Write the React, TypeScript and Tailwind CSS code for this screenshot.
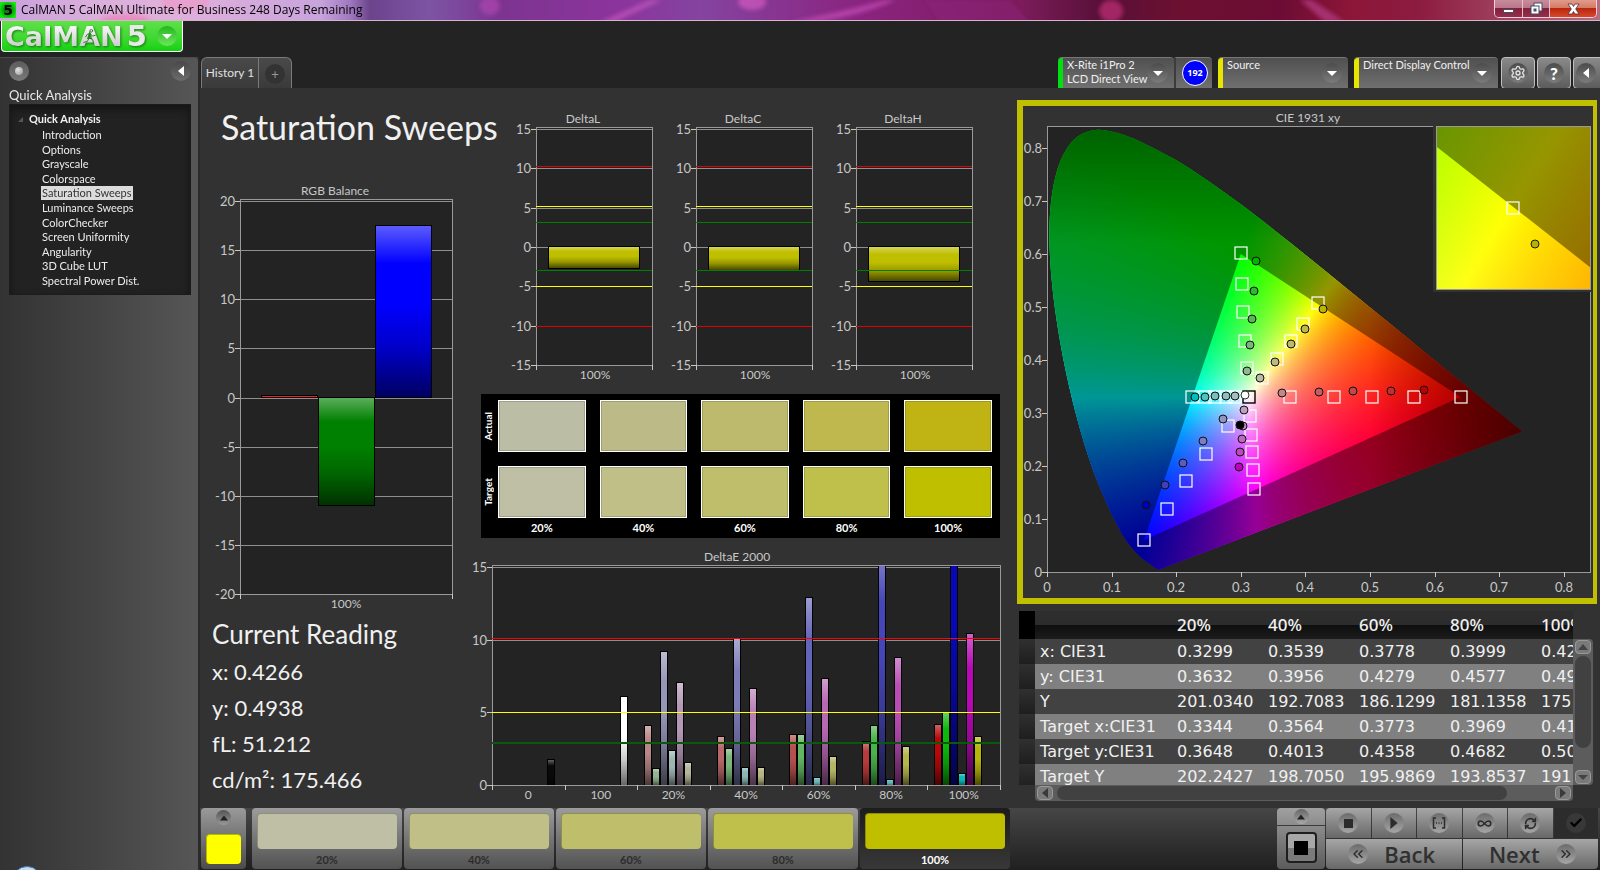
import React from 'react'
import { Settings, RefreshCw, Infinity as InfinityIcon, Check, ChevronsLeft, ChevronsRight } from 'lucide-react'

const NAV_ITEMS = [
  'Introduction',
  'Options',
  'Grayscale',
  'Colorspace',
  'Saturation Sweeps',
  'Luminance Sweeps',
  'ColorChecker',
  'Screen Uniformity',
  'Angularity',
  '3D Cube LUT',
  'Spectral Power Dist.',
]

const LEVELS = ['20%', '40%', '60%', '80%', '100%']

const SWATCHES = [
  { actual: '#bbbda5', target: '#bfbfa5' },
  { actual: '#bcba86', target: '#c0bf87' },
  { actual: '#bdba6d', target: '#bfbf6b' },
  { actual: '#bfb84f', target: '#bfc04b' },
  { actual: '#bfb414', target: '#bfbf00' },
]

const READINGS = ['x: 0.4266', 'y: 0.4938', 'fL: 51.212', 'cd/m²: 175.466']

const TABLE_ROWS = [
  ['x: CIE31', '0.3299', '0.3539', '0.3778', '0.3999', '0.4266'],
  ['y: CIE31', '0.3632', '0.3956', '0.4279', '0.4577', '0.4938'],
  ['Y', '201.0340', '192.7083', '186.1299', '181.1358', '175.4660'],
  ['Target x:CIE31', '0.3344', '0.3564', '0.3773', '0.3969', '0.4193'],
  ['Target y:CIE31', '0.3648', '0.4013', '0.4358', '0.4682', '0.5053'],
  ['Target Y', '202.2427', '198.7050', '195.9869', '193.8537', '191.9590'],
]

/* ---------- bar charts ---------- */

interface Bar {
  x: number
  w: number
  v: number
  color: string
}

interface ChartProps {
  id: string
  title: string
  titleX: number
  width: number
  height: number
  plot: { x: number; y: number; w: number; h: number }
  min: number
  max: number
  limits?: { v: number; color: string; w?: number }[]
  bars: Bar[]
  labels: { x: number; text: string }[]
  ticks: number[]
}

function BarChart({ id, title, titleX, width, height, plot, min, max, limits = [], bars, labels, ticks }: ChartProps) {
  const range = max - min
  const gridY = (v: number) => Math.round(plot.y + 2 + ((max - v) / range) * (plot.h - 2))
  const valueY = (v: number) => Math.round(plot.y - 1 + ((max - v) / range) * (plot.h + 2))
  const steps: number[] = []
  for (let v = max; v >= min; v -= 5) steps.push(v)
  const bottom = plot.y + plot.h

  return (
    <svg viewBox={`0 0 ${width} ${height}`} className="block h-auto w-full" role="img" aria-label={title}>
      <defs>
        <linearGradient id={`${id}-shade`} x1="0" y1="0" x2="0" y2="1">
          <stop offset="0" stopColor="#fff" stopOpacity="0.36" />
          <stop offset="0.22" stopColor="#fff" stopOpacity="0" />
          <stop offset="0.45" stopColor="#000" stopOpacity="0" />
          <stop offset="0.7" stopColor="#000" stopOpacity="0.2" />
          <stop offset="1" stopColor="#000" stopOpacity="0.62" />
        </linearGradient>
        <clipPath id={`${id}-plot`}>
          <rect x={plot.x} y={plot.y + 1} width={plot.w} height={plot.h - 1} />
        </clipPath>
      </defs>
      <text x={titleX} y={plot.y - 4} textAnchor="middle" fontSize="12" fill="#c8c8c8">{title}</text>
      <g shapeRendering="crispEdges">
        <rect x={plot.x} y={plot.y} width={plot.w} height={plot.h} fill="#232323" />
        {steps.map((v) => (
          <g key={v} stroke="#8f8f8f">
            <line x1={plot.x} x2={plot.x + plot.w} y1={gridY(v) + 0.5} y2={gridY(v) + 0.5} />
            <line x1={plot.x - 5} x2={plot.x} y1={gridY(v) + 0.5} y2={gridY(v) + 0.5} stroke="#c8c8c8" />
          </g>
        ))}
        <rect x={plot.x + 0.5} y={plot.y + 0.5} width={plot.w} height={plot.h} fill="none" stroke="#9a9a9a" />
        <g clipPath={`url(#${id}-plot)`}>
          {bars.map((b, i) => {
            const y0 = valueY(Math.max(0, min))
            const y1 = valueY(b.v)
            const top = Math.min(y0, y1)
            const h = Math.max(2, Math.abs(y1 - y0))
            return (
              <g key={i}>
                <rect x={b.x} y={top} width={b.w} height={h + 1} fill="#000" />
                <rect x={b.x + 1} y={top + 1} width={b.w - 2} height={h - 1} fill={b.color} />
                <rect x={b.x + 1} y={top + 1} width={b.w - 2} height={h - 1} fill={`url(#${id}-shade)`} />
              </g>
            )
          })}
        </g>
        {limits.map((l) => (
          <rect key={l.v} x={plot.x} y={valueY(l.v)} width={plot.w} height={l.w ?? 1} fill={l.color} />
        ))}
        {ticks.map((x) => (
          <rect key={x} x={x} y={bottom} width="1" height="5" fill="#c8c8c8" />
        ))}
      </g>
      {steps.map((v) => (
        <text key={v} x={plot.x - 5} y={gridY(v) + 5} textAnchor="end" fontSize="13" fill="#c8c8c8">{v}</text>
      ))}
      {labels.map((l) => (
        <text key={l.text} x={l.x} y={bottom + 14} textAnchor="middle" fontSize="12" fill="#c8c8c8">{l.text}</text>
      ))}
    </svg>
  )
}

const DELTA_LIMITS = [
  { v: 10, color: '#e00000' },
  { v: 5, color: '#ffff00' },
  { v: 3, color: '#008000' },
  { v: -3, color: '#008000' },
  { v: -5, color: '#ffff00' },
  { v: -10, color: '#e00000' },
]

function DeltaChart({ id, title, value }: { id: string; title: string; value: number }) {
  return (
    <BarChart
      id={id}
      title={title}
      titleX={83}
      width={160}
      height={280}
      plot={{ x: 36, y: 19, w: 116, h: 238 }}
      min={-15}
      max={15}
      limits={DELTA_LIMITS}
      bars={[{ x: 48, w: 92, v: value, color: '#bfbf00' }]}
      labels={[{ x: 95, text: '100%' }]}
      ticks={[36, 152]}
    />
  )
}

// slot order inside a group: R G B C M Y W
const DELTA_E: { label: string; bars: [number, number, string][] }[] = [
  { label: '0', bars: [[6, 1.85, '#0a0a0a']] },
  { label: '100', bars: [[6, 6.1, '#ffffff']] },
  { label: '20%', bars: [[0, 4.1, '#b98787'], [1, 1.2, '#92b492'], [2, 9.1, '#9696b8'], [3, 2.45, '#9fb5b5'], [4, 7.05, '#b698b6'], [5, 1.63, '#b5b59b']] },
  { label: '40%', bars: [[0, 3.35, '#b86868'], [1, 2.6, '#7bb57b'], [2, 9.97, '#7c7cb8'], [3, 1.28, '#8cb6b6'], [4, 6.65, '#b980b6'], [5, 1.28, '#b5b582']] },
  { label: '60%', bars: [[0, 3.5, '#b75050'], [1, 3.5, '#63b463'], [2, 12.8, '#6464b8'], [3, 0.6, '#6fb7b7'], [4, 7.33, '#b768b2'], [5, 2.04, '#b5b566']] },
  { label: '80%', bars: [[0, 3.07, '#b83a3a'], [1, 4.1, '#48b548'], [2, 16, '#4646b8'], [3, 0.46, '#58b8b8'], [4, 8.73, '#b94cb5'], [5, 2.73, '#b5b54b']] },
  { label: '100%', bars: [[0, 4.17, '#b80808'], [1, 5, '#0bb80b'], [2, 20, '#0808b8'], [3, 0.87, '#0bb8b8'], [4, 10.35, '#b808b5'], [5, 3.35, '#b5b50b']] },
]

function DeltaEChart() {
  const left = 22
  const width = 508
  const group = width / DELTA_E.length
  return (
    <BarChart
      id="delta-e"
      title="DeltaE 2000"
      titleX={267}
      width={540}
      height={260}
      plot={{ x: left, y: 21, w: width, h: 220 }}
      min={0}
      max={15}
      limits={[
        { v: 10, color: '#ff0000' },
        { v: 5, color: '#ffff00' },
        { v: 3, color: '#0b5a0b', w: 2 },
      ]}
      bars={DELTA_E.flatMap((g, i) =>
        g.bars.map(([slot, v, color]) => ({
          x: Math.round(left + i * group + 7 + slot * 8),
          w: 8,
          v,
          color,
        }))
      )}
      labels={DELTA_E.map((g, i) => ({ x: left + (i + 0.5) * group, text: g.label }))}
      ticks={[0, 1, 2, 3, 4, 5, 6, 7].map((i) => Math.round(left + i * group))}
    />
  )
}

/* ---------- chromaticity diagram ---------- */

type Pt = [number, number]

const LOCUS: Pt[] = [
  [0.1741, 0.005], [0.1714, 0.0051], [0.1644, 0.0109], [0.1566, 0.0177], [0.144, 0.0297], [0.1241, 0.0578],
  [0.1096, 0.0868], [0.0913, 0.1327], [0.0687, 0.2007], [0.0454, 0.295], [0.0235, 0.4127], [0.0082, 0.5384],
  [0.0039, 0.6548], [0.0139, 0.7502], [0.0389, 0.812], [0.0743, 0.8338], [0.1142, 0.8262], [0.1547, 0.8059],
  [0.1929, 0.7816], [0.2296, 0.7543], [0.3016, 0.6923], [0.3731, 0.6245], [0.4441, 0.5547], [0.5125, 0.4866],
  [0.5752, 0.4242], [0.627, 0.3725], [0.6658, 0.334], [0.6915, 0.3083], [0.719, 0.2809], [0.7347, 0.2653],
]
const GAMUT: Pt[] = [[0.3, 0.6], [0.64, 0.33], [0.15, 0.06]]

// xy -> display colour, scaled so that the strongest channel is full
function xyColor(x: number, y: number) {
  const X = x / y
  const Z = (1 - x - y) / y
  const lin = [
    3.2406 * X - 1.5372 - 0.4986 * Z,
    -0.9689 * X + 1.8758 + 0.0415 * Z,
    0.0557 * X - 0.204 + 1.057 * Z,
  ].map((c) => Math.max(0, c))
  const peak = Math.max(...lin)
  let fade = 1
  if (x > 0.5) fade -= (x - 0.5) * 2.2
  if (y > 0.62) fade -= (y - 0.62) * 1.6
  const [r, g, b] = lin.map((c) => Math.round((255 * fade * c) / peak))
  return `rgb(${r},${g},${b})`
}

interface View {
  x: number
  y: number
  w: number
  h: number
  x0: number
  x1: number
  y0: number
  y1: number
}

function ColorField({ id, view }: { id: string; view: View }) {
  const sx = (v: number) => view.x + ((v - view.x0) / (view.x1 - view.x0)) * view.w
  const sy = (v: number) => view.y + view.h - ((v - view.y0) / (view.y1 - view.y0)) * view.h
  const p = ([x, y]: Pt) => `${sx(x).toFixed(1)} ${sy(y).toFixed(1)}`

  let locus = `M${p(LOCUS[0])}`
  for (let i = 0; i < LOCUS.length - 1; i++) {
    const a = LOCUS[Math.max(0, i - 1)]
    const b = LOCUS[i]
    const c = LOCUS[i + 1]
    const d = LOCUS[Math.min(LOCUS.length - 1, i + 2)]
    locus += `C${p([b[0] + (c[0] - a[0]) / 6, b[1] + (c[1] - a[1]) / 6])} ${p([c[0] - (d[0] - b[0]) / 6, c[1] - (d[1] - b[1]) / 6])} ${p(c)}`
  }
  locus += 'Z'
  const triangle = `M${GAMUT.map(p).join('L')}Z`

  const rows: React.ReactNode[] = []
  const cols = Math.round(view.w / 6)
  for (let ry = 0; ry < view.h; ry += 2) {
    const y = view.y1 - ((ry + 1) / view.h) * (view.y1 - view.y0)
    const stops: React.ReactNode[] = []
    for (let c = 0; c <= cols; c++) {
      const x = view.x0 + (c / cols) * (view.x1 - view.x0)
      if (x + y > 1.03) break
      stops.push(<stop key={c} offset={(c / cols).toFixed(4)} stopColor={xyColor(x, Math.max(y, 0.002))} />)
    }
    // each strip runs under the next one so no seam shows between them
    rows.push(
      <g key={ry}>
        <linearGradient id={`${id}-${ry}`}>{stops}</linearGradient>
        <rect x={view.x} y={view.y + ry} width={view.w} height="4" fill={`url(#${id}-${ry})`} shapeRendering="crispEdges" />
      </g>
    )
  }

  return (
    <g>
      <clipPath id={`${id}-frame`}>
        <rect x={view.x} y={view.y} width={view.w} height={view.h} />
      </clipPath>
      <clipPath id={`${id}-locus`}>
        <path d={locus} />
      </clipPath>
      <g clipPath={`url(#${id}-frame)`}>
        <g clipPath={`url(#${id}-locus)`}>{rows}</g>
        <path d={locus + triangle} fill="#000" fillOpacity="0.41" fillRule="evenodd" />
      </g>
    </g>
  )
}

const TARGETS: Pt[] = [
  [0.2998, 0.6025], [0.3016, 0.5428], [0.3039, 0.4912], [0.3068, 0.4365], [0.3103, 0.3849],
  [0.4198, 0.5075], [0.3964, 0.4686], [0.3773, 0.4365], [0.3563, 0.4025], [0.3324, 0.3667],
  [0.6403, 0.3308], [0.5675, 0.3308], [0.5023, 0.3308], [0.4447, 0.3308], [0.3754, 0.3308],
  [0.2241, 0.3308], [0.2445, 0.3308], [0.2602, 0.3308], [0.2771, 0.3308], [0.2916, 0.3308],
  [0.3207, 0.1566], [0.319, 0.1918], [0.3167, 0.2258], [0.3155, 0.2585], [0.3138, 0.2937],
  [0.1496, 0.061], [0.1851, 0.1195], [0.2159, 0.1723], [0.2462, 0.222], [0.2794, 0.2761],
]

const MEASURED: [number, number, string][] = [
  [0.3237, 0.5868, '#00b400'], [0.3202, 0.5302, '#35b535'], [0.3173, 0.478, '#58b558'], [0.3138, 0.4283, '#78b578'], [0.3098, 0.3799, '#92b892'],
  [0.4267, 0.4962, '#bfb400'], [0.3994, 0.4591, '#bfb74f'], [0.3779, 0.4302, '#bdb96d'], [0.3533, 0.3962, '#bcb986'], [0.33, 0.3654, '#bbbca5'],
  [0.5838, 0.344, '#c00000'], [0.5326, 0.3421, '#c03030'], [0.4738, 0.3421, '#c04a4a'], [0.4214, 0.339, '#c06060'], [0.3632, 0.3371, '#c08888'],
  [0.2294, 0.3308, '#00bfbf'], [0.2445, 0.3308, '#55bfbf'], [0.2602, 0.3327, '#78bfbf'], [0.2765, 0.3327, '#90bfbf'], [0.2916, 0.3327, '#a5bfbf'],
  [0.2975, 0.1987, '#bf00bf'], [0.2993, 0.2264, '#bf48bf'], [0.3016, 0.2516, '#bf68bf'], [0.3039, 0.2761, '#bf88bf'], [0.3051, 0.305, '#bf9fbf'],
  [0.2993, 0.278, '#000000'],
  [0.1537, 0.127, '#0000b8'], [0.1828, 0.1648, '#4040bc'], [0.2107, 0.2063, '#5c5cbe'], [0.2416, 0.2472, '#7c7cc0'], [0.2724, 0.2893, '#9494c0'],
]

function CieChart() {
  const view = { x: 24, y: 20, w: 544, h: 446, x0: 0, x1: 0.842, y0: 0, y1: 0.8415 }
  const inset = { x: 413, y: 20, w: 154, h: 163, x0: 0.3959, x1: 0.4437, y0: 0.479, y1: 0.5302 }
  const sx = (v: number) => Math.round(view.x + (v / view.x1) * view.w)
  const sy = (v: number) => Math.round(view.y + view.h - (v / view.y1) * view.h)
  const marks = [0, 1, 2, 3, 4, 5, 6, 7, 8]

  return (
    <svg viewBox="0 0 570 492" className="block h-auto w-full" role="img" aria-label="CIE 1931 xy">
      <text x="285" y="16" textAnchor="middle" fontSize="12" fill="#c8c8c8">CIE 1931 xy</text>
      <rect x={view.x + 0.5} y={view.y + 0.5} width={view.w - 1} height={view.h} fill="#232323" stroke="#9a9a9a" />
      {marks.map((m) => (
        <g key={m} shapeRendering="crispEdges">
          <rect x={view.x - 5} y={sy(m / 10)} width="5" height="1" fill="#c8c8c8" />
          <rect x={sx(m / 10)} y={view.y + view.h} width="1" height="5" fill="#c8c8c8" />
        </g>
      ))}
      {marks.map((m) => (
        <g key={m} fontSize="13" fill="#c8c8c8">
          <text x={view.x - 5} y={sy(m / 10) + 5} textAnchor="end">{m / 10}</text>
          <text x={sx(m / 10)} y={view.y + view.h + 20} textAnchor="middle">{m / 10}</text>
        </g>
      ))}
      <ColorField id="cie" view={view} />
      {TARGETS.map(([x, y], i) => (
        <rect key={i} x={sx(x) - 6} y={sy(y) - 6} width="12" height="12" fill="none" stroke="#fff" strokeWidth="1.2" />
      ))}
      <rect x={sx(0.312) - 6} y={sy(0.3308) - 6} width="12" height="12" fill="none" stroke="#000" strokeWidth="1.4" />
      {MEASURED.map(([x, y, color], i) => (
        <circle key={i} cx={sx(x)} cy={sy(y)} r="4" fill={color} stroke="#101010" />
      ))}
      <circle cx={sx(0.3068)} cy={sy(0.3346)} r="4" fill="#fff" stroke="#303030" />

      <rect x="410" y="18" width="160" height="168" fill="#323232" />
      <ColorField id="inset" view={inset} />
      <rect x="413.5" y="20.5" width="154" height="163" fill="none" stroke="#9a9a9a" />
      <rect x="484" y="96" width="12" height="12" fill="none" stroke="#fff" strokeWidth="1.2" />
      <circle cx="512" cy="138" r="4" fill="#b4b400" stroke="#202000" />
    </svg>
  )
}

/* ---------- window chrome and controls ---------- */

function TitleBar() {
  return (
    <div className="relative flex h-[21px] items-stretch overflow-hidden border-b border-[#d9b3cc] bg-[linear-gradient(90deg,#c8a0dc_0,#dcb0dc_100px,#e0b0dc_180px,#c8a4dc_320px,#a078c0_350px,#6c448c_370px,#7c54a4_430px,#7c3490_500px,#8c349c_620px,#8444a0_700px,#8a2480_860px,#7c1c5c_1020px,#581038_1100px,#6c1030_1180px,#6c0c34_1280px,#8c1638_1350px,#8c1c40_1420px,#b86c80_100%)]">
      <svg className="absolute inset-0 h-full w-full" viewBox="0 0 1600 20" preserveAspectRatio="none" aria-hidden="true">
        <defs>
          <filter id="title-blur"><feGaussianBlur stdDeviation="2" /></filter>
        </defs>
        <g filter="url(#title-blur)">
          <ellipse cx="125" cy="22" rx="26" ry="8" fill="#f06aa8" opacity="0.5" />
          <ellipse cx="185" cy="2" rx="24" ry="9" fill="#f58ab8" opacity="0.4" />
          <ellipse cx="490" cy="6" rx="10" ry="9" fill="#b84ab4" opacity="0.6" />
          <ellipse cx="752" cy="2" rx="14" ry="8" fill="#e060c8" opacity="0.6" />
          <path d="M600 22 L650 0 L662 0 L614 22Z" fill="#c858c0" opacity="0.7" />
          <path d="M790 22 Q850 10 885 0 L896 0 Q860 16 815 22Z" fill="#c850b8" opacity="0.7" />
          <path d="M940 22 L925 0 L1010 0 L1030 22Z" fill="#8c2080" opacity="0.4" />
          <ellipse cx="1111" cy="11" rx="12" ry="11" fill="#b42a70" opacity="0.8" />
          <path d="M1300 0 L1312 0 L1345 22 L1325 22Z" fill="#b03a80" opacity="0.8" />
        </g>
      </svg>
      <div className="relative flex flex-1 items-center">
        <span className="flex h-4 w-4 items-center justify-center bg-[radial-gradient(#0a7a0a_20%,#10e810_80%)] font-['DejaVu_Sans',sans-serif] text-sm leading-none font-bold text-black">5</span>
        <h1 className="ml-[5px] font-['Open_Sans',sans-serif] text-[12px] leading-5 text-black">
          CalMAN 5 CalMAN Ultimate for Business 248 Days Remaining
        </h1>
      </div>
      <div className="relative mr-[3px] flex h-[18px] overflow-hidden rounded-b-[5px] border border-t-0 border-[#f0d0dc]">
        <button aria-label="Minimize" className="flex w-7 items-end justify-center border-r border-[#e8c0cc] bg-[linear-gradient(#c88c9c_0,#b87488_50%,#84203c_50%,#94304c_100%)] pb-1">
          <span className="h-1 w-[11px] border border-[#405060] bg-white" />
        </button>
        <button aria-label="Restore" className="flex w-[27px] items-center justify-center border-r border-[#e8c0cc] bg-[linear-gradient(#c88c9c_0,#b87488_50%,#84203c_50%,#94304c_100%)]">
          <svg width="13" height="13" viewBox="0 0 13 13" fill="none">
            <rect x="4" y="1" width="8" height="8" fill="#fff" stroke="#405060" />
            <rect x="1" y="4" width="8" height="8" fill="#fff" stroke="#405060" />
            <rect x="4" y="7" width="2" height="2" fill="#94304c" stroke="#405060" />
          </svg>
        </button>
        <button aria-label="Close" className="flex w-[46px] items-center justify-center bg-[linear-gradient(#e09c8c_0,#d47860_50%,#b82810_50%,#d84828_100%)]">
          <svg width="13" height="12" viewBox="0 0 13 12">
            <path d="M1 1h4l1.500 2.500L8 1h4L8.700 6l3.300 5H8L6.500 8.500 5 11H1l3.300-5z" fill="#fff" stroke="#503040" strokeWidth="0.8" />
          </svg>
        </button>
      </div>
    </div>
  )
}

function Logo() {
  return (
    <button className="ml-px flex h-[31px] w-[182px] items-center rounded-b border-r border-b border-l border-white bg-linear-to-b from-[#5fe04a] to-[#0cd20c] pl-[3px]" aria-label="CalMAN 5 menu">
      <span className="relative bg-linear-to-b from-white to-[#c4c4c4] bg-clip-text font-['DejaVu_Sans',sans-serif] text-[27px] leading-[27px] font-bold text-transparent drop-shadow-[1px_1px_1px_rgba(0,60,0,0.6)]">
        CalMAN
        <svg className="absolute top-[5px] left-[77px]" width="16" height="18" viewBox="0 0 18 20" fill="none" stroke="#2c7a2c" strokeWidth="1.100" strokeLinecap="round">
          <circle cx="10.500" cy="3" r="1.500" />
          <path d="M9 6l-3 1-2 3M9 6l3 3 3-1M9 6l-1 5 4 2 1 4M8 11l-2 4-4 1" />
        </svg>
      </span>
      <span className="ml-1 font-['DejaVu_Sans',sans-serif] text-[29px] leading-[27px] font-bold text-[#e8e8e8] drop-shadow-[1px_1px_1px_rgba(0,60,0,0.6)]">5</span>
      <span className="ml-2.5 flex h-5 w-5 items-center justify-center rounded-full bg-linear-to-b from-[#1cb81c] to-[#6ae65a]">
        <Triangle dir="down" />
      </span>
    </button>
  )
}

function Triangle({ dir, color = '#fff', size = 10 }: { dir: 'up' | 'down' | 'left' | 'right'; color?: string; size?: number }) {
  const d = {
    up: 'M0 8 5 2 10 8z',
    down: 'M0 3h10L5 8z',
    left: 'M8 0v10L2 5z',
    right: 'M2 0v10l6-5z',
  }[dir]
  return (
    <svg width={size} height={size} viewBox="0 0 10 10" aria-hidden="true">
      <path d={d} fill={color} />
    </svg>
  )
}

function Knob({ children }: { children: React.ReactNode }) {
  return (
    <span className="flex h-5 w-5 items-center justify-center rounded-full bg-linear-to-b from-[#4c4c4c] to-[#7c7c7c]">
      {children}
    </span>
  )
}

function Sidebar() {
  return (
    <aside className="relative flex w-[200px] shrink-0 flex-col overflow-hidden rounded-tr border-t border-r-2 border-t-[#4a4a4a] border-r-[#2a2a2a] bg-linear-to-r from-[#333333] to-[#565656] pr-[7px] pl-[9px]">
      <div className="flex items-center justify-between pt-[3px]">
        <button aria-label="Pin" className="flex h-5 w-5 items-center justify-center rounded-full bg-linear-to-b from-[#5c5c5c] to-[#7a7a7a]">
          <span className="h-2 w-2 rounded-full bg-[radial-gradient(circle_at_35%_35%,#e4e4e4,#909090)]" />
        </button>
        <button aria-label="Collapse panel" className="flex h-5 w-5 items-center justify-center rounded-full bg-linear-to-b from-[#484848] to-[#6c6c6c]">
          <Triangle dir="left" />
        </button>
      </div>
      <h2 className="mt-1.5 text-[13px] leading-[17px] text-[#e8e8e8]">Quick Analysis</h2>
      <nav className="border border-[#1c1c1c] bg-[#222222] pt-[7px] pb-1.5 shadow-[inset_0_4px_8px_#141414]">
        <div className="flex items-center text-[11px] leading-[14px] font-bold text-[#f0f0f0]">
          <svg className="ml-2 mr-[6px]" width="5" height="5" viewBox="0 0 5 5"><path d="M5 0v5H0z" fill="#555" /></svg>
          Quick Analysis
        </div>
        <ul className="mt-0.5 flex h-[160px] flex-col justify-between pl-[31px] text-[11px] leading-[14px] text-[#ececec]">
          {NAV_ITEMS.map((item) => (
            <li key={item}>
              <a
                href="#"
                className={
                  item === 'Saturation Sweeps'
                    ? 'inline-block bg-[#dcdcdc] px-px text-[#333]'
                    : 'inline-block px-px'
                }
              >
                {item}
              </a>
            </li>
          ))}
        </ul>
      </nav>
      {/* top edge of the taskbar orb peeking over the window */}
      <span className="absolute -bottom-[26px] left-3 h-[30px] w-[30px] rounded-full border border-[#3a78b0] bg-[#c8dcec]" />
    </aside>
  )
}

function DeviceBox({ lines, accent, className }: { lines: string[]; accent: 'green' | 'yellow'; className: string }) {
  return (
    <button className={`flex h-[31px] items-start rounded-t border-t border-[#777] bg-linear-to-b from-[#505050] to-[#707070] text-left ${className}`}>
      <span className={accent === 'green' ? 'h-full w-[5px] rounded-tl bg-[#00e010]' : 'h-full w-[5px] rounded-tl bg-[#e6e600]'} />
      <span className="ml-1 flex-1 text-[11px] leading-[14px] whitespace-nowrap text-[#f0f0f0]">
        {lines.map((l) => (
          <span key={l} className="block">{l}</span>
        ))}
      </span>
      <span className="mt-[5px] mr-1.5">
        <Knob><Triangle dir="down" /></Knob>
      </span>
    </button>
  )
}

const SQUARE_BTN = 'flex h-8 w-[34px] shrink-0 items-center justify-center rounded border border-[#c0c0c0] bg-linear-to-b from-[#8a8a8a] to-[#5c5c5c]'

function TabRow() {
  return (
    <div className="flex h-[31px] items-start justify-between">
      <div className="ml-px flex h-[31px] rounded-t-md border border-b-0 border-[#7a7a7a] bg-linear-to-b from-[#4a4a4a] to-[#3a3a3a] text-[12px] text-[#e0e0e0]">
        <button className="w-[57px] border-r border-[#7a7a7a] whitespace-nowrap">History 1</button>
        <button aria-label="Add tab" className="flex w-8 items-center justify-center">
          <span className="mt-0.5 flex h-5 w-5 items-center justify-center rounded-full bg-[#333] text-[13px] leading-none text-[#999]">+</span>
        </button>
      </div>
      <div className="flex">
        <div className="flex">
          <DeviceBox accent="green" lines={['X-Rite i1Pro 2', 'LCD Direct View']} className="w-[116px]" />
          <div className="flex h-[31px] w-[38px] items-center justify-center rounded-tr border-t border-l-2 border-t-[#777] border-l-[#3c3c3c] bg-linear-to-b from-[#505050] to-[#707070] pl-0.5">
            <span className="flex h-[26px] w-[26px] items-center justify-center rounded-full border border-white bg-[#0000ff] font-['Open_Sans',sans-serif] text-[9px] font-bold text-white">192</span>
          </div>
        </div>
        <DeviceBox accent="yellow" lines={['Source']} className="ml-1.5 w-[130px]" />
        <DeviceBox accent="yellow" lines={['Direct Display Control']} className="ml-1.5 w-[144px]" />
        <div className="ml-[3px] flex w-[99px] gap-0.5 overflow-hidden">
          <button aria-label="Settings" className={SQUARE_BTN}>
            <Knob><Settings size={16} color="#e4e4e4" strokeWidth={2} /></Knob>
          </button>
          <button aria-label="Help" className={SQUARE_BTN}>
            <Knob><span className="text-[17px] leading-none font-black text-white">?</span></Knob>
          </button>
          <button aria-label="Collapse toolbar" className={`${SQUARE_BTN} justify-start pl-0.5`}>
            <Knob><Triangle dir="left" /></Knob>
          </button>
        </div>
      </div>
    </div>
  )
}

function SwatchPanel() {
  return (
    <div className="mt-1.5 mr-2.5 ml-[11px] h-36 bg-black pt-1.5 pr-2 text-white">
      {(['actual', 'target'] as const).map((kind) => (
        <div key={kind} className="mb-[14px] flex h-[52px] last:mb-0">
          <div className="flex w-[17px] items-center justify-center pr-1">
            <span className="rotate-180 text-[10px] leading-3 font-bold capitalize [writing-mode:vertical-rl]">{kind}</span>
          </div>
          <div className="grid flex-1 grid-cols-5 gap-x-[14px]">
            {SWATCHES.map((s, i) => (
              <div
                key={i}
                className="border border-white shadow-[inset_0_0_0_1px_rgba(0,0,0,0.15)]"
                style={{ backgroundColor: s[kind] }}
              />
            ))}
          </div>
        </div>
      ))}
      <div className="-mt-[11px] grid grid-cols-5 gap-x-[14px] pl-[17px]">
        {LEVELS.map((l) => (
          <span key={l} className="text-center text-[11px] leading-[14px] font-bold">{l}</span>
        ))}
      </div>
    </div>
  )
}

const SCROLL_BTN = 'flex h-[14px] w-4 shrink-0 items-center justify-center rounded-sm border border-[#999] bg-[#7a7a7a]'

function ResultsTable() {
  return (
    <div className="mt-[7px] ml-0.5 grid grid-cols-[minmax(0,1fr)_20px] pr-1">
      <div className="h-[174px] overflow-hidden">
        <table className="w-[608px] table-fixed border-collapse font-['DejaVu_Sans',sans-serif] text-[16px] text-[#f0f0f0]">
          <thead>
            <tr className="h-7 bg-[linear-gradient(#2e2e2e_0,#2c2c2c_50%,#0e0e0e_50%,#1c1c1c_100%)]">
              <th className="w-4 bg-black p-0" />
              <th className="w-[137px] p-0" />
              {LEVELS.map((l) => (
                <th key={l} scope="col" className="w-[91px] p-0 pl-[5px] text-left font-['Noto_Sans',sans-serif] text-[17px] leading-7 font-medium">{l}</th>
              ))}
            </tr>
          </thead>
          <tbody>
            {TABLE_ROWS.map((row, i) => (
              <tr key={row[0]} className={i % 2 ? 'h-[25px] bg-[#808080]' : 'h-[25px] bg-[#424242]'}>
                <td className="bg-linear-to-b from-[#303030] to-[#1e1e1e] p-0" />
                <th scope="row" className="p-0 pl-[5px] text-left leading-[25px] font-normal whitespace-nowrap">{row[0]}</th>
                {row.slice(1).map((v, c) => (
                  <td key={c} className="p-0 pl-[5px] leading-[25px]">{v}</td>
                ))}
              </tr>
            ))}
          </tbody>
        </table>
      </div>
      <div className="mt-7 flex flex-col items-center justify-between gap-0.5 rounded-r bg-[#5c5c5c] py-px">
        <button aria-label="Scroll up" className={SCROLL_BTN}><Triangle dir="up" color="#444" /></button>
        <div className="mb-5 w-4 flex-1 rounded-full bg-[#414141]" />
        <button aria-label="Scroll down" className={SCROLL_BTN}><Triangle dir="down" color="#444" /></button>
      </div>
      <div className="ml-4 flex h-4 items-center gap-1 rounded-b bg-[#5c5c5c] px-0.5">
        <button aria-label="Scroll left" className={SCROLL_BTN}><Triangle dir="left" color="#3a3a3a" /></button>
        <div className="mr-11 h-[14px] flex-1 rounded-full bg-[#414141]" />
        <button aria-label="Scroll right" className={SCROLL_BTN}><Triangle dir="right" color="#3a3a3a" /></button>
      </div>
    </div>
  )
}

function GrayKnob({ children }: { children: React.ReactNode }) {
  return (
    <span className="flex h-5 w-5 items-center justify-center rounded-full bg-linear-to-b from-[#6c6c6c] to-[#a6a6a6] text-[#2c2c2c]">
      {children}
    </span>
  )
}

const CTRL = 'flex flex-1 items-center justify-center bg-linear-to-b from-[#a6a6a6] to-[#686868]'

function BottomBar() {
  return (
    <footer className="flex h-[62px] bg-linear-to-b from-[#464646] to-[#202020] pl-px">
      <button aria-label="Show pattern window" className="flex h-[61px] w-[45px] flex-col items-center rounded bg-linear-to-b from-[#9a9a9a] to-[#4c4c4c] pt-0.5">
        <span className="flex h-[15px] w-[15px] items-center justify-center rounded-full bg-linear-to-b from-[#555] to-[#999]">
          <Triangle dir="up" color="#222" size={8} />
        </span>
        <span className="mt-[9px] h-[30px] w-[35px] rounded-sm border-t border-l border-[#b8b800] bg-[#ffff00]" />
      </button>
      <div className="ml-1.5 flex gap-0.5">
        {SWATCHES.map((s, i) => {
          const active = i === 4
          return (
            <button
              key={i}
              className={
                active
                  ? 'flex h-[61px] w-[150px] flex-col items-center rounded bg-linear-to-b from-[#1c1c1c] to-[#383838] pt-[5px] text-[11px] font-bold text-white'
                  : 'flex h-[61px] w-[150px] flex-col items-center rounded bg-linear-to-b from-[#9c9c9c] to-[#525252] pt-[5px] text-[11px] font-bold text-[#2c2c2c]'
              }
            >
              <span className="h-9 w-[140px] rounded border-t border-l border-black/25" style={{ backgroundColor: s.target }} />
              <span className="mt-1 leading-[14px]">{LEVELS[i]}</span>
            </button>
          )
        })}
      </div>
      <div className="ml-auto flex w-[323px] gap-px">
        <button aria-label="Pattern size" className="flex h-[61px] w-12 flex-col items-center rounded bg-linear-to-b from-[#a0a0a0] to-[#5c5c5c]">
          <span className="flex h-[18px] w-full items-center justify-center border-b border-[#3c3c3c]">
            <span className="flex h-[15px] w-[15px] items-center justify-center rounded-full bg-linear-to-b from-[#666] to-[#aaa]">
              <Triangle dir="up" color="#222" size={8} />
            </span>
          </span>
          <span className="mt-[6px] flex h-[31px] w-[31px] items-center justify-center rounded border-2 border-[#1e1e1e] bg-[linear-gradient(#a8a8a8_50%,#7a7a7a_50%)]">
            <span className="h-[14px] w-[14px] bg-black" />
          </span>
        </button>
        <div className="flex flex-1 flex-col gap-px pr-0.5 pb-px">
          <div className="flex flex-1 gap-px">
            <button aria-label="Stop" className={`${CTRL} rounded-tl`}>
              <GrayKnob><span className="h-[9px] w-[9px] bg-[#2c2c2c]" /></GrayKnob>
            </button>
            <button aria-label="Play" className={CTRL}>
              <GrayKnob><Triangle dir="right" color="#2c2c2c" size={12} /></GrayKnob>
            </button>
            <button aria-label="Read series" className={CTRL}>
              <GrayKnob>
                <svg width="14" height="12" viewBox="0 0 14 12" fill="none" stroke="#2c2c2c" strokeWidth="1.500">
                  <path d="M4 1H1.500v10H4M10 1h2.500v10H10M4 6h1M6.500 6h1M9 6h1" />
                </svg>
              </GrayKnob>
            </button>
            <button aria-label="Read continuously" className={CTRL}>
              <GrayKnob><InfinityIcon size={15} strokeWidth={2.5} /></GrayKnob>
            </button>
            <button aria-label="Refresh" className={CTRL}>
              <GrayKnob><RefreshCw size={13} strokeWidth={3} /></GrayKnob>
            </button>
            <button aria-label="Accept" className="flex flex-1 items-center justify-center bg-[#2c2c2c]">
              <span className="flex h-5 w-5 items-center justify-center rounded-full bg-[#383838] text-black">
                <Check size={14} strokeWidth={4} />
              </span>
            </button>
          </div>
          <div className="flex flex-1 gap-px font-['Open_Sans',sans-serif] text-[22px] leading-none font-semibold text-[#303030]">
            <button className={`${CTRL} rounded-bl`}>
              <GrayKnob><ChevronsLeft size={16} /></GrayKnob>
              <span className="mr-1 ml-4">Back</span>
            </button>
            <button className={`${CTRL} rounded-br`}>
              <span className="mr-4 ml-1">Next</span>
              <GrayKnob><ChevronsRight size={16} /></GrayKnob>
            </button>
          </div>
        </div>
      </div>
    </footer>
  )
}

export default function App() {
  return (
    <div className="flex min-h-screen flex-col bg-[#232323] font-[Lato,sans-serif]">
      <TitleBar />
      <header className="h-9">
        <Logo />
      </header>
      <div className="flex flex-1">
        <Sidebar />
        <div className="flex min-w-0 flex-1 flex-col">
          <TabRow />
          <main className="grid flex-1 grid-cols-[minmax(0,270fr)_minmax(0,540fr)_minmax(0,590fr)] bg-[#323232]">
            <section>
              <h2 className="pt-[19px] pb-px pl-[21px] text-[34px] leading-10 whitespace-nowrap text-[#f0f0f0]">Saturation Sweeps</h2>
              <div className="mt-8">
                <BarChart
                  id="rgb"
                  title="RGB Balance"
                  titleX={135}
                  width={270}
                  height={432}
                  plot={{ x: 40, y: 19, w: 212, h: 395 }}
                  min={-20}
                  max={20}
                  bars={[
                    { x: 61, w: 57, v: 0.2, color: '#ff2020' },
                    { x: 118, w: 57, v: -10.9, color: '#008000' },
                    { x: 175, w: 57, v: 17.3, color: '#0000ff' },
                  ]}
                  labels={[{ x: 146, text: '100%' }]}
                  ticks={[40, 252]}
                />
              </div>
              <div className="mt-1 pl-3 text-[22px] leading-9 text-[#f0f0f0]">
                <h3 className="mb-0.5 text-[26px] leading-9">Current Reading</h3>
                {READINGS.map((r) => (
                  <p key={r}>{r}</p>
                ))}
              </div>
            </section>

            <section>
              <div className="mt-5 grid grid-cols-3 px-[30px]">
                <DeltaChart id="dl" title="DeltaL" value={-2.8} />
                <DeltaChart id="dc" title="DeltaC" value={-3} />
                <DeltaChart id="dh" title="DeltaH" value={-4.4} />
              </div>
              <SwatchPanel />
              <div className="mt-1.5">
                <DeltaEChart />
              </div>
            </section>

            <section className="pt-3 pr-[3px] pl-[7px]">
              <div className="border-y-6 border-r-4 border-l-6 border-[#c0c000]">
                <CieChart />
              </div>
              <ResultsTable />
            </section>
          </main>
          <BottomBar />
        </div>
      </div>
    </div>
  )
}
